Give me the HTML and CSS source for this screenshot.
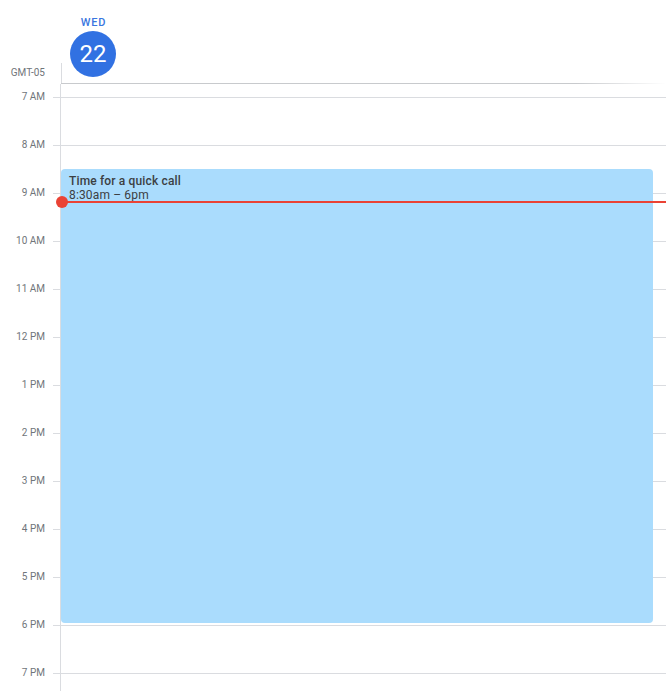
FILE: index.html
```html
<!DOCTYPE html>
<html>
<head>
<meta charset="utf-8">
<link rel="stylesheet" href="styles.css">
</head>
<body>
<div class="cal">
  <div class="head">
    <div class="head-gutter"><span class="tz">GMT-05</span></div>
    <div class="head-day">
      <div class="day-cell">
        <div class="dow">WED</div>
        <div class="date">22</div>
      </div>
    </div>
  </div>
  <div class="main">
    <div class="gutter">
      <div class="slot"><span class="lbl">7 AM</span></div>
      <div class="slot"><span class="lbl">8 AM</span></div>
      <div class="slot"><span class="lbl">9 AM</span></div>
      <div class="slot"><span class="lbl">10 AM</span></div>
      <div class="slot"><span class="lbl">11 AM</span></div>
      <div class="slot"><span class="lbl">12 PM</span></div>
      <div class="slot"><span class="lbl">1 PM</span></div>
      <div class="slot"><span class="lbl">2 PM</span></div>
      <div class="slot"><span class="lbl">3 PM</span></div>
      <div class="slot"><span class="lbl">4 PM</span></div>
      <div class="slot"><span class="lbl">5 PM</span></div>
      <div class="slot"><span class="lbl">6 PM</span></div>
      <div class="slot"><span class="lbl">7 PM</span></div>
    </div>
    <div class="col">
      <div class="hour"></div><div class="hour"></div><div class="hour"></div>
      <div class="hour"></div><div class="hour"></div><div class="hour"></div>
      <div class="hour"></div><div class="hour"></div><div class="hour"></div>
      <div class="hour"></div><div class="hour"></div><div class="hour"></div>
      <div class="hour"></div>
      <div class="event">
        <div class="ev-title">Time for a quick call</div>
        <div class="ev-time">8:30am – 6pm</div>
      </div>
      <div class="now"><span class="now-dot"></span></div>
    </div>
  </div>
</div>
</body>
</html>
```
FILE: styles.css
```css
html, body {
  margin: 0;
  padding: 0;
  background: #fff;
}
body {
  font-family: Roboto, "Liberation Sans", Arial, sans-serif;
  width: 666px;
  height: 691px;
  overflow: hidden;
}
.cal {
  display: flex;
  flex-direction: column;
}
.head {
  display: flex;
  height: 84px;
}
.head-gutter {
  width: 61px;
  flex: none;
  display: flex;
  align-items: flex-end;
  justify-content: flex-end;
  box-sizing: border-box;
  padding-right: 16px;
  padding-bottom: 5px;
}
.tz {
  font-size: 10px;
  line-height: 12px;
  color: #70757a;
}
.head-day {
  flex: 1;
  position: relative;
  box-sizing: border-box;
  border-bottom: 1px solid #c8cacd;
  background: linear-gradient(#dadce0, #dadce0) 0 63px / 1px 21px no-repeat;
}
.head-day::after {
  content: "";
  position: absolute;
  right: 0;
  bottom: -1px;
  width: 90px;
  height: 1px;
  background: linear-gradient(to right, rgba(255,255,255,0), #fff);
}
.day-cell {
  width: 64px;
  padding-top: 16px;
  display: flex;
  flex-direction: column;
  align-items: center;
}
.dow {
  font-size: 11px;
  line-height: 14px;
  font-weight: 500;
  letter-spacing: 0.8px;
  color: #3a76e0;
  margin-left: 1px;
}
.date {
  margin-top: 1px;
  width: 46px;
  height: 46px;
  border-radius: 50%;
  background: #3171e2;
  color: #fff;
  font-size: 24px;
  line-height: 46px;
  text-align: center;
}
.main {
  display: flex;
}
.gutter {
  width: 61px;
  flex: none;
  padding-top: 13px;
}
.slot {
  height: 48px;
  display: flex;
  align-items: flex-start;
}
.lbl {
  width: 45px;
  margin-top: -6px;
  font-size: 10px;
  line-height: 12px;
  color: #70757a;
  text-align: right;
  flex: none;
}
.slot::after {
  content: "";
  width: 8px;
  margin-left: 8px;
  border-top: 1px solid #dadce0;
}
.col {
  flex: 1;
  position: relative;
  padding-top: 13px;
  border-left: 1px solid #dadce0;
  margin-left: -1px;
}
.hour {
  height: 47px;
  border-top: 1px solid #dadce0;
}
.event {
  position: absolute;
  left: 0;
  top: 85px;
  width: 592px;
  height: 454px;
  box-sizing: border-box;
  background: #aadcfd;
  border-radius: 4px;
  padding: 5px 8px;
  color: #3c4043;
  font-size: 12px;
  line-height: 14px;
  letter-spacing: 0.15px;
}
.ev-title {
  font-weight: 500;
}
.now {
  position: absolute;
  left: 0;
  right: 0;
  top: 117px;
  height: 2px;
  background: #ea4335;
}
.now-dot {
  position: absolute;
  left: -5px;
  top: -5px;
  width: 12px;
  height: 12px;
  border-radius: 50%;
  background: #ea4335;
}
```
